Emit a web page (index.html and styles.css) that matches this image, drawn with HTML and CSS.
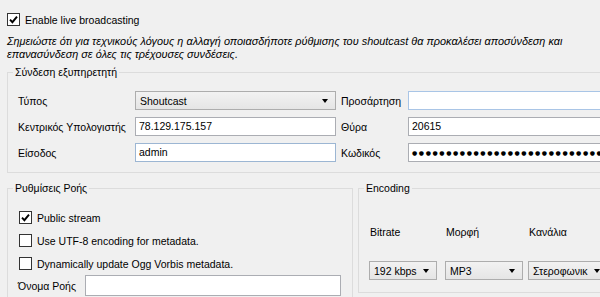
FILE: index.html
```html
<!DOCTYPE html>
<html lang="el">
<head>
    <meta charset="UTF-8">
    <title>Shoutcast</title>
    <link rel="stylesheet" href="styles.css">
</head>
<body>
    <div class="window">
        <div class="check live">
            <span class="box"><svg viewBox="0 0 11 11" width="11" height="11"><path d="M2 5.6 L4.4 8.2 L9 2.6" fill="none" stroke="#000" stroke-width="1.9"/></svg></span>
            <span>Enable live broadcasting</span>
        </div>

        <p class="note">Σημειώστε ότι για τεχνικούς λόγους η αλλαγή οποιασδήποτε ρύθμισης του shoutcast θα προκαλέσει αποσύνδεση και<br>επανασύνδεση σε όλες τις τρέχουσες συνδέσεις.</p>

        <fieldset class="group server">
            <legend>Σύνδεση εξυπηρετητή</legend>
            <div class="server-grid">
                <span class="lbl">Τύπος</span>
                <div class="combo"><span>Shoutcast</span><i class="arrow"></i></div>
                <span class="lbl side">Προσάρτηση</span>
                <div class="field hot"></div>

                <span class="lbl">Κεντρικός Υπολογιστής</span>
                <div class="field">78.129.175.157</div>
                <span class="lbl side">Θύρα</span>
                <div class="field">20615</div>

                <span class="lbl">Είσοδος</span>
                <div class="field focus">admin</div>
                <span class="lbl side">Κωδικός</span>
                <div class="field pass">●●●●●●●●●●●●●●●●●●●●●●●●●●●●●●●●●●●●</div>
            </div>
        </fieldset>

        <div class="lower">
            <fieldset class="group stream">
                <legend>Ρυθμίσεις Ροής</legend>
                <div class="check-list">
                    <div class="check">
                        <span class="box"><svg viewBox="0 0 11 11" width="11" height="11"><path d="M2 5.6 L4.4 8.2 L9 2.6" fill="none" stroke="#000" stroke-width="1.9"/></svg></span>
                        <span>Public stream</span>
                    </div>
                    <div class="check">
                        <span class="box"></span>
                        <span>Use UTF-8 encoding for metadata.</span>
                    </div>
                    <div class="check">
                        <span class="box"></span>
                        <span>Dynamically update Ogg Vorbis metadata.</span>
                    </div>
                </div>
                <div class="name-row">
                    <span class="lbl">Όνομα Ροής</span>
                    <div class="field tall"></div>
                </div>
            </fieldset>

            <fieldset class="group encoding">
                <legend>Encoding</legend>
                <div class="enc-grid">
                    <span class="lbl">Bitrate</span>
                    <span class="lbl">Μορφή</span>
                    <span class="lbl">Κανάλια</span>
                    <div class="combo bitrate"><span>192 kbps</span><i class="arrow"></i></div>
                    <div class="combo format"><span>MP3</span><i class="arrow"></i></div>
                    <div class="combo"><span>Στεροφωνικ</span><i class="arrow"></i></div>
                </div>
            </fieldset>
        </div>
    </div>
</body>
</html>
```

FILE: styles.css
```css
/* Base */
html, body {
    margin: 0;
    padding: 0;
}

body {
    width: 600px;
    height: 297px;
    overflow: hidden;
    background: #f0f0f0;
    font-family: "Liberation Sans", Arial, sans-serif;
    font-size: 10.5px;
    color: #000;
}

.window {
    width: 640px;
}

/* Checkboxes */
.check {
    display: flex;
    align-items: center;
    height: 13px;
    gap: 5px;
    white-space: nowrap;
}

.box {
    width: 11px;
    height: 11px;
    border: 1px solid #333;
    background: #fff;
    display: flex;
    flex: none;
}

.live {
    margin: 13px 0 0 7px;
}

.note {
    margin: 9px 0 0 7px;
    font-size: 10.9px;
    font-style: italic;
    line-height: 13px;
    white-space: nowrap;
}

/* Group boxes */
.group {
    margin: 0;
    border: 1px solid #dcdcdc;
    min-width: 0;
    box-sizing: border-box;
}

.group legend {
    padding: 0 2px;
    margin-left: -5px;
    line-height: 14px;
}

.server {
    margin: 4px 0 0 7px;
    width: 630px;
    padding: 12px 0 10px 10px;
}

.lbl {
    white-space: nowrap;
    line-height: 14px;
}

.server-grid {
    display: grid;
    grid-template-columns: 117px 201px 72px 1fr;
    grid-auto-rows: 19px;
    row-gap: 7px;
    align-items: center;
}

.server-grid .side {
    padding-left: 5px;
}

/* Inputs */
.field {
    height: 19px;
    box-sizing: border-box;
    border: 1px solid #abadb3;
    background: #fff;
    padding: 0 3px;
    line-height: 17px;
    white-space: nowrap;
    overflow: hidden;
}

.field.hot {
    border-color: #a9c5e6;
}

.field.focus {
    border-color: #9cb6d3;
}

.field.pass {
    font-family: "DejaVu Sans", sans-serif;
    font-size: 6px;
    letter-spacing: 1.6px;
    padding-left: 3px;
}

.field.tall {
    height: 21px;
}

.combo {
    height: 19px;
    box-sizing: border-box;
    border: 1px solid #adadad;
    background: linear-gradient(#f2f2f2, #e5e5e5);
    display: flex;
    align-items: center;
    justify-content: space-between;
    padding: 0 7px 0 4px;
    white-space: nowrap;
    overflow: hidden;
}

.arrow {
    width: 0;
    height: 0;
    border-left: 3.5px solid transparent;
    border-right: 3.5px solid transparent;
    border-top: 4px solid #000;
    flex: none;
}

/* Lower section */
.lower {
    display: flex;
    gap: 5px;
    margin: 8px 0 0 7px;
    align-items: flex-start;
}

.stream {
    width: 346px;
    height: 140px;
    padding: 16px 11px 0 10px;
}

.check-list {
    display: flex;
    flex-direction: column;
    gap: 10px;
    margin-left: 1px;
}

.name-row {
    display: flex;
    align-items: center;
    margin-top: 5px;
}

.name-row .lbl {
    width: 67px;
    flex: none;
}

.name-row .field {
    flex: 1;
}

.encoding {
    width: 270px;
    padding: 30px 0 12px 10px;
}

.enc-grid {
    display: grid;
    grid-template-columns: 76px 83px 80px;
    row-gap: 22px;
}

.enc-grid .lbl {
    padding-left: 1px;
}

.combo.bitrate {
    width: 68px;
}

.combo.format {
    width: 78px;
}
```
